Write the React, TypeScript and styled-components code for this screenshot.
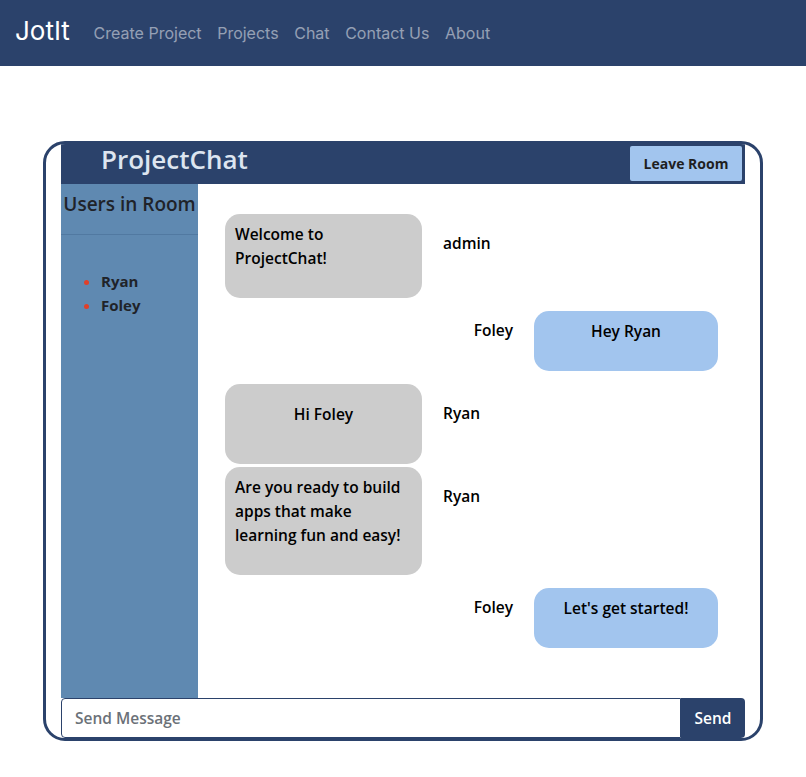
import React from "react";
import styled, { createGlobalStyle } from "styled-components";

const GlobalStyle = createGlobalStyle`
  * { box-sizing: border-box; }
  body {
    margin: 0;
    background: #ffffff;
    font-family: "Open Sans", "Noto Sans", sans-serif;
  }
`;

const navLinks = ["Create Project", "Projects", "Chat", "Contact Us", "About"];

const users = ["Ryan", "Foley"];

type Msg = { text: string; user: string; own: boolean };

const messages: Msg[] = [
  { text: "Welcome to ProjectChat!", user: "admin", own: false },
  { text: "Hey Ryan", user: "Foley", own: true },
  { text: "Hi Foley", user: "Ryan", own: false },
  { text: "Are you ready to build apps that make learning fun and easy!", user: "Ryan", own: false },
  { text: "Let's get started!", user: "Foley", own: true },
];

const App = () => {
  return (
    <>
      <GlobalStyle />
      <Navbar>
        <Brand>JotIt</Brand>
        <NavList>
          {navLinks.map((l) => (
            <NavLink key={l}>{l}</NavLink>
          ))}
        </NavList>
      </Navbar>

      <Page>
        <ChatCard>
          <ChatHeader>
            <Title>ProjectChat</Title>
            <LeaveButton>Leave Room</LeaveButton>
          </ChatHeader>

          <ChatMain>
            <Sidebar>
              <SideTitle>Users in Room</SideTitle>
              <UserList>
                {users.map((u) => (
                  <li key={u}>{u}</li>
                ))}
              </UserList>
            </Sidebar>

            <Messages>
              {messages.map((m, i) => (
                <MessageRow key={i} $own={m.own}>
                  <Bubble $own={m.own}>
                    <p>{m.text}</p>
                  </Bubble>
                  <Author $own={m.own}>{m.user}</Author>
                </MessageRow>
              ))}
            </Messages>
          </ChatMain>

          <SendForm>
            <MessageInput placeholder="Send Message" />
            <SendButton>Send</SendButton>
          </SendForm>
        </ChatCard>
      </Page>
    </>
  );
};

const Navbar = styled.nav`
  height: 66px;
  background: #2b426b;
  display: flex;
  align-items: center;
  padding: 0 15px;
  font-family: Inter, Roboto, "Liberation Sans", sans-serif;
`;

const Brand = styled.a`
  color: #ffffff;
  font-size: 26px;
  margin-right: 16px;
  margin-top: -6px;
`;

const NavList = styled.div`
  display: flex;
  margin-top: -1px;
`;

const NavLink = styled.a`
  color: rgba(255, 255, 255, 0.5);
  font-size: 16px;
  padding: 0 7.8px;
`;

const Page = styled.main`
  padding: 75px 43px 0;
`;

const ChatCard = styled.div`
  width: 720px;
  height: 600px;
  border: 3px solid #2b426b;
  border-radius: 22px;
  padding: 0 15px;
  display: flex;
  flex-direction: column;
  overflow: hidden;
`;

const ChatHeader = styled.header`
  height: 40px;
  background: #2b426b;
  display: flex;
  align-items: center;
  justify-content: space-between;
  padding: 0 3px 0 40px;
`;

const Title = styled.h1`
  margin: -10px 0 0;
  color: #dde5f0;
  font-size: 26px;
  font-weight: 600;
`;

const LeaveButton = styled.button`
  background: #a2c5ee;
  border: none;
  border-radius: 2px;
  height: 35px;
  width: 112px;
  margin-top: -2px;
  color: #1f1f1f;
  font-family: inherit;
  font-weight: 700;
  font-size: 14px;
`;

const ChatMain = styled.div`
  flex: 1;
  display: flex;
  min-height: 0;
`;

const Sidebar = styled.aside`
  width: 137px;
  background: #5f89b1;
  color: #1f2329;
`;

const SideTitle = styled.h3`
  margin: 0;
  height: 51px;
  padding-top: 7px;
  border-bottom: 1px solid #5179a1;
  text-align: center;
  font-size: 19px;
  font-weight: 600;
  white-space: nowrap;
`;

const UserList = styled.ul`
  margin: 34px 0 0;
  padding-left: 40px;
  font-size: 15px;
  font-weight: 700;
  line-height: 24px;
  li::marker {
    color: #e0402a;
  }
`;

const Messages = styled.div`
  flex: 1;
  padding: 30px 27px 0;
  color: #000000;
`;

const MessageRow = styled.div<{ $own: boolean }>`
  display: flex;
  flex-direction: ${(p) => (p.$own ? "row-reverse" : "row")};
  align-items: flex-start;
  gap: 21px;
  margin: ${(p) => (p.$own ? "13px 0" : "0 0 3px")};
`;

const Bubble = styled.div<{ $own: boolean }>`
  width: ${(p) => (p.$own ? "184px" : "197px")};
  min-height: ${(p) => (p.$own ? "60px" : "80px")};
  border-radius: 15px;
  padding: 8px 10px 12px;
  background: ${(p) => (p.$own ? "#a2c5ee" : "#cccccc")};
  display: flex;
  align-items: ${(p) => (p.$own ? "flex-start" : "center")};
  justify-content: center;
  p {
    margin: 0 0 16px;
    font-size: 15.5px;
    font-weight: 600;
    line-height: 24px;
    text-align: ${(p) => (p.$own ? "center" : "left")};
  }
`;

const Author = styled.span<{ $own: boolean }>`
  margin-top: ${(p) => (p.$own ? "7px" : "17px")};
  font-size: 15.5px;
  font-weight: 600;
  line-height: 24px;
`;

const SendForm = styled.form`
  height: 40px;
  display: flex;
`;

const MessageInput = styled.input`
  flex: 1;
  border: 1px solid #2b426b;
  border-radius: 4px 0 0 4px;
  padding: 0 13px;
  font-family: inherit;
  font-size: 15.5px;
  font-weight: 600;
  color: #333;
  &::placeholder {
    color: #6b7178;
  }
`;

const SendButton = styled.button`
  width: 64px;
  background: #2b426b;
  color: #ffffff;
  border: none;
  border-radius: 0 4px 4px 0;
  font-family: inherit;
  font-size: 15.5px;
  font-weight: 600;
`;

export default App;
